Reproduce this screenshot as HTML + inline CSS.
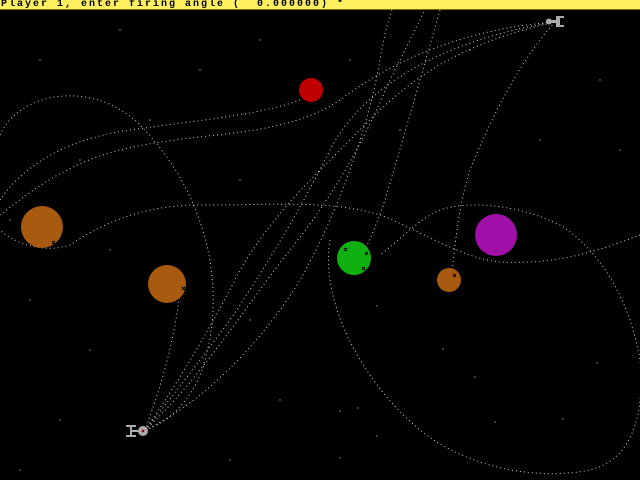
<!DOCTYPE html>
<html><head><style>
html,body{margin:0;padding:0;background:#000;width:640px;height:480px;overflow:hidden}
#bar{position:absolute;left:0;top:0;width:640px;height:9px;background:#fff060;border-bottom:1px solid #807000}
#bar span{position:absolute;left:1px;top:0px;font:bold 10px/9px "Liberation Mono",monospace;color:#000;letter-spacing:2px;white-space:pre}
svg{position:absolute;left:0;top:0}
</style></head><body>
<svg width="640" height="480">
<g fill="#999">
<circle cx="40" cy="60" r=".7"/><circle cx="120" cy="30" r=".7"/><circle cx="200" cy="70" r=".7"/><circle cx="260" cy="40" r=".7"/><circle cx="350" cy="60" r=".7"/><circle cx="470" cy="50" r=".7"/><circle cx="600" cy="80" r=".7"/><circle cx="620" cy="150" r=".7"/><circle cx="80" cy="160" r=".7"/><circle cx="240" cy="180" r=".7"/><circle cx="30" cy="300" r=".7"/><circle cx="90" cy="350" r=".7"/><circle cx="60" cy="420" r=".7"/><circle cx="250" cy="320" r=".7"/><circle cx="280" cy="400" r=".7"/><circle cx="230" cy="460" r=".7"/><circle cx="377" cy="306" r=".7"/><circle cx="443" cy="349" r=".7"/><circle cx="475" cy="377" r=".7"/><circle cx="358" cy="408" r=".7"/><circle cx="340" cy="411" r=".7"/><circle cx="495" cy="422" r=".7"/><circle cx="563" cy="419" r=".7"/><circle cx="377" cy="436" r=".7"/><circle cx="340" cy="458" r=".7"/><circle cx="597" cy="363" r=".7"/><circle cx="20" cy="470" r=".7"/><circle cx="150" cy="120" r=".7"/><circle cx="400" cy="130" r=".7"/><circle cx="540" cy="140" r=".7"/><circle cx="10" cy="220" r=".7"/><circle cx="110" cy="250" r=".7"/>
</g>
<g fill="none" stroke="#ccc" stroke-width="1" stroke-dasharray="1 3">
<path d="M0,135 C20,90 95,80 140,125 C195,180 230,270 205,360 C195,400 165,425 145,430"/>
<path d="M640,235 C600,250 560,265 500,262 C460,258 420,230 380,215 C330,200 280,205 200,205 C140,205 100,225 70,245 C40,255 10,240 0,230"/>
<path d="M330,240 C320,300 360,380 420,430 C470,470 540,480 590,470 C630,460 645,420 640,360 C630,300 600,250 560,225 C520,205 470,200 440,210 C420,218 400,240 380,255"/>
<path d="M145,430 C200,380 250,300 290,250 C330,200 360,150 390,80 C410,40 420,20 425,10"/>
<path d="M145,430 C210,400 270,330 300,280 C340,210 370,120 380,60 C385,30 390,15 392,10"/>
<path d="M145,430 C180,380 215,320 240,270 C270,220 300,190 340,150 C390,100 430,50 555,22"/>
<path d="M145,430 C170,400 200,360 230,320 C270,260 300,210 330,150 C360,90 440,40 555,22"/>
<path d="M555,22 C450,30 380,70 340,100 C280,140 200,130 120,150 C60,165 20,200 0,215"/>
<path d="M555,22 C520,60 490,120 470,170 C460,200 455,240 452,275"/>
<path d="M440,10 C420,80 400,150 385,200 C375,230 365,250 360,260"/>
<path d="M145,430 C160,390 175,340 180,290"/>
<path d="M0,200 C20,170 60,140 130,130 C200,120 260,115 300,100"/>
</g>
<circle cx="311" cy="90" r="12" fill="#c00000"/>
<circle cx="42" cy="227" r="21" fill="#a85a10"/>
<circle cx="167" cy="284" r="19" fill="#a85a10"/>
<circle cx="354" cy="258" r="17" fill="#10b010"/>
<circle cx="449" cy="280" r="12" fill="#a85a10"/>
<circle cx="496" cy="235" r="21" fill="#a010a8"/>
<g stroke="#000" stroke-width="1"><path d="M52,241 l3,3 M55,241 l-3,3 M182,287 l3,3 M185,287 l-3,3 M344,248 l3,3 M347,248 l-3,3 M365,252 l3,3 M368,252 l-3,3 M362,267 l3,3 M365,267 l-3,3 M453,274 l3,3 M456,274 l-3,3"/></g>
<g fill="#aaa"><rect x="126" y="425" width="10" height="2"/><rect x="126" y="435" width="10" height="2"/><rect x="130" y="427" width="2" height="8"/><rect x="130" y="430" width="9" height="2"/><circle cx="143" cy="431" r="5"/></g>
<circle cx="143" cy="431" r="1.3" fill="#800"/>
<g fill="#aaa"><rect x="546" y="20" width="12" height="3"/><circle cx="549" cy="21.5" r="3"/><path d="M556,16 h8 v2 h-4 v7 h4 v2 h-8z"/></g>
</svg>
<div id="bar"><span>Player 1, enter firing angle (  0.000000) *</span></div>
</body></html>
